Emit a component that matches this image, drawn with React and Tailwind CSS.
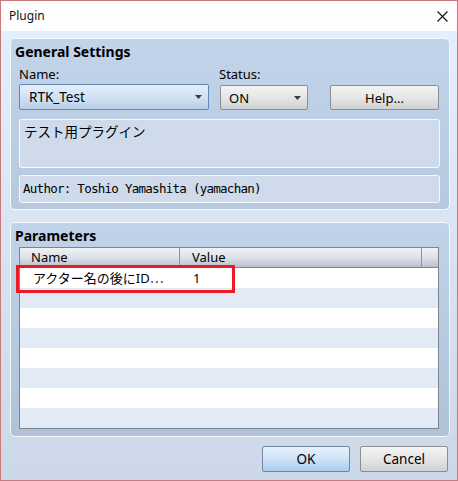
const Arrow = () => (
  <svg width="7" height="4" viewBox="0 0 7 4" className="block">
    <path d="M0 0 H7 L3.5 4 Z" fill="#3a3a3a" />
  </svg>
);

const rows = [0, 1, 2, 3, 4, 5, 6, 7];

export default function App() {
  return (
    <div className="w-[458px] h-[481px] border border-[#c9797e] flex flex-col bg-white font-['Noto_Sans','Noto_Sans_CJK_JP',sans-serif] text-black overflow-hidden">
      {/* title bar */}
      <div className="h-[30px] flex items-center justify-between pl-[8px] pr-[9px] bg-[#fefefe] shrink-0">
        <span className="text-[12px] leading-[16px] text-[#111]">Plugin</span>
        <svg width="11" height="11" viewBox="0 0 11 11">
          <path d="M0.5 0.5 L10.5 10.5 M10.5 0.5 L0.5 10.5" stroke="#111" strokeWidth="1.1" />
        </svg>
      </div>

      {/* body */}
      <div className="flex-1 bg-gradient-to-b from-[#e3effc] to-[#ccd8e7] pl-[9px] pr-[7px] pt-[7px] flex flex-col">
        {/* General Settings */}
        <div className="h-[172px] w-[440px] rounded-[5px] border border-[#f4f8fc] bg-gradient-to-b from-[#c2d4ea] to-[#b7c9de] flex flex-col shrink-0">
          <div className="mt-[4px] pl-[4px] h-[18px] leading-[18px] text-[14px] font-bold">General Settings</div>
          <div className="mt-[5px] pl-[8px] h-[16px] leading-[16px] text-[13px] flex">
            <span className="w-[200px]">Name:</span>
            <span>Status:</span>
          </div>
          <div className="mt-[2px] pl-[8px] h-[26px] flex items-end text-[13px]">
            <div className="w-[190px] h-[26px] rounded-[2px] border border-[#6189b3] bg-gradient-to-b from-[#e4eef9] via-[#d2e2f3] to-[#b9cfe8] flex items-center justify-between pl-[9px] pr-[6px]">
              <span className="leading-[16px] text-[13.5px]">RTK_Test</span>
              <Arrow />
            </div>
            <div className="ml-[11px] w-[88px] h-[25px] rounded-[2px] border border-[#8c8e91] bg-gradient-to-b from-[#f3f3f3] via-[#e6e6e6] to-[#cfd0d2] flex items-center justify-between pl-[8px] pr-[6px]">
              <span className="leading-[16px]">ON</span>
              <Arrow />
            </div>
            <div className="ml-[22px] w-[109px] h-[25px] rounded-[2px] border border-[#8c8e91] bg-gradient-to-b from-[#f3f3f3] via-[#e6e6e6] to-[#cfd0d2] flex items-center justify-center">
              <span className="leading-[16px]">Help...</span>
            </div>
          </div>
          <div className="mt-[9px] ml-[8px] w-[421px] h-[49px] rounded-[3px] border border-[#f5f8fc] bg-[#cfdbea] pl-[4px] pt-[3px] text-[13.5px] leading-[18px]">
            テスト用プラグイン
          </div>
          <div className="mt-[7px] ml-[8px] w-[421px] h-[28px] rounded-[3px] border border-[#f5f8fc] bg-[#cfdbea] pl-[3px] flex items-center font-['DejaVu_Sans_Mono',monospace] text-[12.5px] tracking-[-0.73px] leading-[16px]">
            Author: Toshio Yamashita (yamachan)
          </div>
        </div>

        {/* Parameters */}
        <div className="mt-[12px] h-[215px] w-[440px] rounded-[5px] border border-[#f4f8fc] bg-gradient-to-b from-[#c1d3e9] to-[#b0c2d8] flex flex-col shrink-0">
          <div className="mt-[4px] pl-[4px] h-[18px] leading-[18px] text-[14px] font-bold">Parameters</div>
          <div className="relative mt-[2px] ml-[8px] w-[420px] h-[182px] border border-[#7b8693] bg-[#e2eaf5] text-[13px]">
            <div className="h-[20px] flex border-b border-[#7b8693] bg-gradient-to-b from-[#f0f2f5] via-[#dde2e8] to-[#b9c1cb]">
              <div className="w-[160px] border-r border-[#8a939d] pl-[11px] leading-[19px]">Name</div>
              <div className="w-[242px] border-r border-[#8a939d] pl-[12px] leading-[19px]">Value</div>
              <div className="flex-1" />
            </div>
            {rows.map((i) => (
              <div key={i} className={i % 2 === 0 ? "h-[20px] flex bg-white" : "h-[20px] flex bg-[#e2eaf5]"}>
                {i === 0 && (
                  <>
                    <div className="w-[160px] pl-[13px] leading-[20px] whitespace-nowrap">
                      アクター名の後にID<span className="font-['Noto_Sans_CJK_JP',sans-serif]">⋯</span>
                    </div>
                    <div className="pl-[13px] leading-[20px]">1</div>
                  </>
                )}
              </div>
            ))}
            <div className="absolute left-[-4px] top-[17px] w-[219px] h-[28px] border-[3px] border-[#ea1b22]" />
          </div>
        </div>

        {/* buttons */}
        <div className="mt-[9px] flex justify-end pr-[2px] text-[13.5px]">
          <div className="w-[88px] h-[26px] rounded-[2px] border border-[#7088a5] bg-gradient-to-b from-[#e6f1fc] via-[#cfe3f7] to-[#a9cbee] flex items-center justify-center leading-[16px]">OK</div>
          <div className="ml-[10px] w-[88px] h-[26px] rounded-[2px] border border-[#8c8e91] bg-gradient-to-b from-[#f3f3f3] via-[#e6e6e6] to-[#cfd0d2] flex items-center justify-center leading-[16px]">Cancel</div>
        </div>
      </div>
    </div>
  );
}
